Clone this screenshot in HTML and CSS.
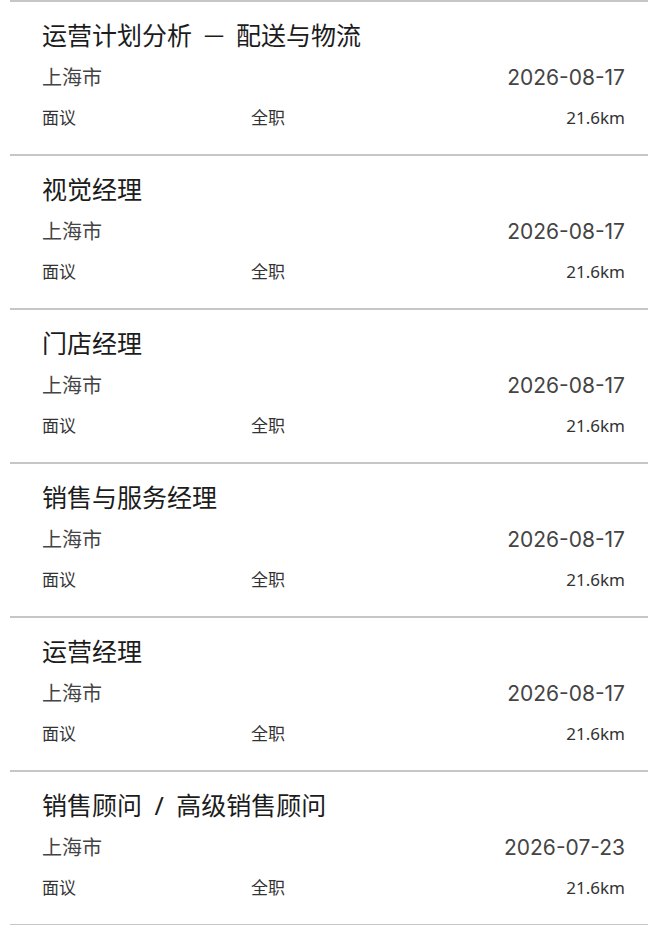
FILE: index.html
```html
<!DOCTYPE html>
<html lang="zh-CN">
<head>
<meta charset="utf-8">
<link rel="stylesheet" href="styles.css">
</head>
<body>
<ul class="list">
  <li class="job">
    <div class="title">运营计划分析<span class="sep">—</span>配送与物流</div>
    <div class="row"><span>上海市</span><span class="date">2026-08-17</span></div>
    <div class="meta"><span>面议</span><span>全职</span><span class="dist">21.6km</span></div>
  </li>
  <li class="job">
    <div class="title">视觉经理</div>
    <div class="row"><span>上海市</span><span class="date">2026-08-17</span></div>
    <div class="meta"><span>面议</span><span>全职</span><span class="dist">21.6km</span></div>
  </li>
  <li class="job">
    <div class="title">门店经理</div>
    <div class="row"><span>上海市</span><span class="date">2026-08-17</span></div>
    <div class="meta"><span>面议</span><span>全职</span><span class="dist">21.6km</span></div>
  </li>
  <li class="job">
    <div class="title">销售与服务经理</div>
    <div class="row"><span>上海市</span><span class="date">2026-08-17</span></div>
    <div class="meta"><span>面议</span><span>全职</span><span class="dist">21.6km</span></div>
  </li>
  <li class="job">
    <div class="title">运营经理</div>
    <div class="row"><span>上海市</span><span class="date">2026-08-17</span></div>
    <div class="meta"><span>面议</span><span>全职</span><span class="dist">21.6km</span></div>
  </li>
  <li class="job">
    <div class="title">销售顾问 / 高级销售顾问</div>
    <div class="row"><span>上海市</span><span class="date">2026-07-23</span></div>
    <div class="meta"><span>面议</span><span>全职</span><span class="dist">21.6km</span></div>
  </li>
</ul>
</body>
</html>
```

FILE: styles.css
```css
html, body {
  margin: 0;
  padding: 0;
  background: #fff;
}
body {
  font-family: "Noto Sans", "Noto Sans CJK SC", sans-serif;
}
.list {
  list-style: none;
  margin: 0;
  padding: 0 2px 0 10px;
}
.job {
  border-top: 2px solid #c6c6c6;
  padding: 13px 23px 17px 32px;
  height: 122px;
}
.job:last-child {
  border-bottom: 2px solid #c6c6c6;
}
.title {
  font-size: 25px;
  line-height: 40px;
  height: 40px;
  color: #1c1c1c;
  white-space: nowrap;
  word-spacing: 6px;
}
.sep {
  font-family: "Noto Sans", sans-serif;
  font-size: 20px;
  line-height: 0;
  margin: 0 12px;
  position: relative;
  top: -3px;
}
.row {
  display: flex;
  justify-content: space-between;
  margin-top: 2px;
  font-size: 20px;
  line-height: 42px;
  color: #444;
}
.date {
  font-family: "Inter", "Noto Sans", sans-serif;
  font-size: 21px;
}
.meta {
  display: grid;
  grid-template-columns: 209px 1fr auto;
  font-size: 17px;
  line-height: 38px;
  color: #333;
}
.dist {
  text-align: right;
}
```
